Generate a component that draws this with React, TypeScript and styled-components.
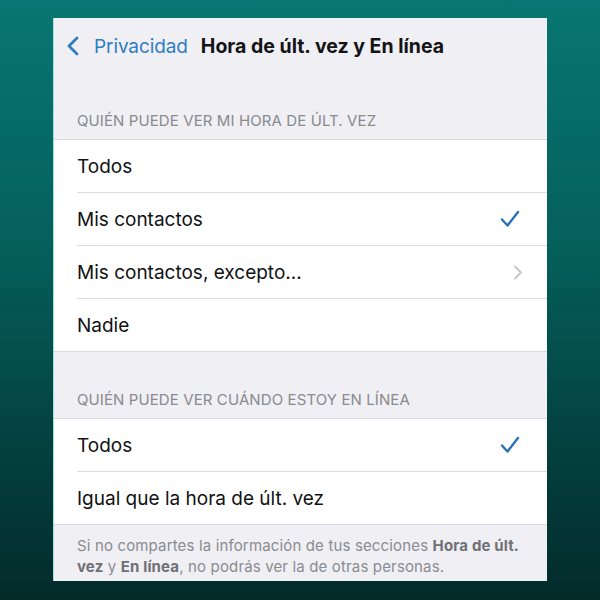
import React from "react";
import styled, { createGlobalStyle } from "styled-components";

const GlobalStyle = createGlobalStyle`
  html, body {
    margin: 0;
    padding: 0;
    height: 600px;
  }
  body {
    background: linear-gradient(180deg, #087672 0%, #05605c 40%, #03403e 75%, #022b2a 100%);
    font-family: Inter, "Noto Sans", Roboto, sans-serif;
    -webkit-font-smoothing: antialiased;
  }
`;

const Stage = styled.div`
  display: flex;
  padding: 18px 0 0 53px;
  height: 600px;
  box-sizing: border-box;
`;

const Panel = styled.div`
  width: 494px;
  height: 563px;
  background: #efeff4;
  border-left: 1px solid #9fe0e0;
  box-sizing: border-box;
  display: flex;
  flex-direction: column;
  overflow: hidden;
`;

const NavBar = styled.div`
  height: 56px;
  display: flex;
  align-items: center;
  padding-left: 12px;
`;

const BackButton = styled.div`
  display: flex;
  align-items: center;
  gap: 14px;
  color: #2f7dc1;
  font-size: 19px;
  letter-spacing: -0.1px;
  margin-right: 13px;
`;

const Title = styled.div`
  font-size: 19.5px;
  font-weight: 700;
  color: #141416;
  letter-spacing: 0;
`;

const SectionHeader = styled.div<{ $top: number }>`
  padding: ${(p) => p.$top}px 24px 10px 23px;
  font-size: 15px;
  color: #8a8a8f;
  letter-spacing: 0.1px;
  line-height: 17px;
`;

const Group = styled.div`
  background: #ffffff;
  border-top: 1px solid #d9d9dd;
  border-bottom: 1px solid #d9d9dd;
  padding-left: 23px;
`;

const Row = styled.div<{ $last?: boolean }>`
  height: 52px;
  display: flex;
  align-items: center;
  justify-content: space-between;
  padding-right: 27px;
  border-bottom: ${(p) => (p.$last ? "none" : "1px solid #dcdce0")};
  font-size: 19px;
  color: #111113;
  letter-spacing: 0;
`;

const DisclosureIcon = styled.svg`
  margin-right: -3px;
`;

const Footer = styled.div`
  padding: 10px 24px 0 23px;
  font-size: 15px;
  line-height: 21px;
  color: #8b8b90;
  letter-spacing: 0.15px;

  b {
    color: #707075;
    font-weight: 700;
  }
`;

const BackChevron = () => (
  <svg width="14" height="20" viewBox="0 0 14 20" fill="none">
    <path d="M11 2 L3 10 L11 18" stroke="#2f7dc1" strokeWidth="2.8" strokeLinecap="round" strokeLinejoin="round" />
  </svg>
);

const Check = () => (
  <svg width="20" height="18" viewBox="0 0 20 18" fill="none">
    <path d="M2 9.5 L7.5 15.5 L18 2" stroke="#2a72b8" strokeWidth="2.4" strokeLinecap="round" strokeLinejoin="round" />
  </svg>
);

const Disclosure = () => (
  <DisclosureIcon width="10" height="15" viewBox="0 0 10 15" fill="none">
    <path d="M2 1.5 L8 7.5 L2 13.5" stroke="#c3c3c8" strokeWidth="1.8" strokeLinecap="round" strokeLinejoin="round" />
  </DisclosureIcon>
);

export default function App() {
  return (
    <>
      <GlobalStyle />
      <Stage>
        <Panel>
          <NavBar>
            <BackButton>
              <BackChevron />
              Privacidad
            </BackButton>
            <Title>Hora de últ. vez y En línea</Title>
          </NavBar>

          <SectionHeader $top={38}>QUIÉN PUEDE VER MI HORA DE ÚLT. VEZ</SectionHeader>
          <Group>
            <Row>Todos</Row>
            <Row>
              Mis contactos
              <Check />
            </Row>
            <Row>
              Mis contactos, excepto...
              <Disclosure />
            </Row>
            <Row $last>Nadie</Row>
          </Group>

          <SectionHeader $top={39}>QUIÉN PUEDE VER CUÁNDO ESTOY EN LÍNEA</SectionHeader>
          <Group>
            <Row>
              Todos
              <Check />
            </Row>
            <Row $last>Igual que la hora de últ. vez</Row>
          </Group>

          <Footer>
            Si no compartes la información de tus secciones <b>Hora de últ. vez</b> y <b>En línea</b>, no podrás ver la de otras personas.
          </Footer>
        </Panel>
      </Stage>
    </>
  );
}
